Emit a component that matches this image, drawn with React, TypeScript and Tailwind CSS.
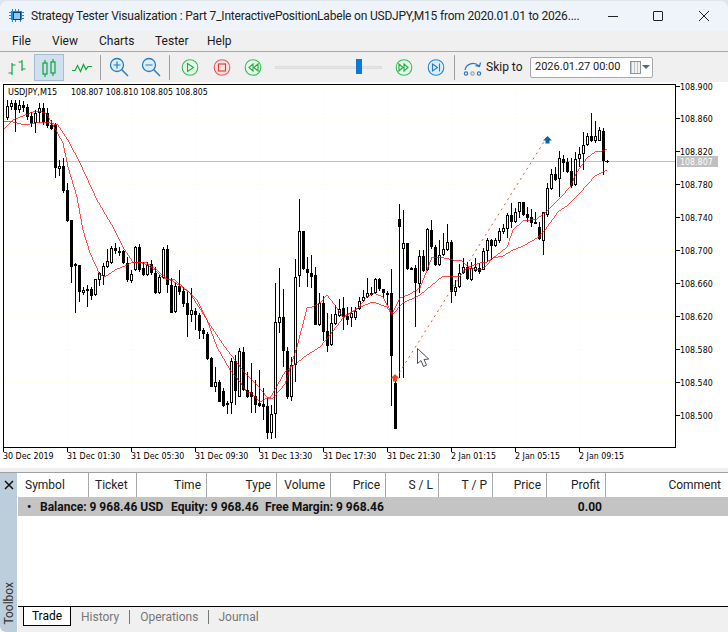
import * as React from "react";

// [x, high, low, bodyTop, bodyBottom, hollow]
const CANDLES: number[][] = [
  [7,100,120,106,118,1],[11,100,110,103,107,1],[15,100,132,103,110,0],[19,100,113,105,110,1],[23,101,112,105,108,0],
  [27,104,120,107,117,0],[31,112,127,116,123,0],[35,110,133,113,123,1],[39,103,123,108,113,1],[43,103,125,108,122,0],
  [47,108,128,113,126,0],[51,120,130,125,129,0],[55,123,178,125,168,0],[59,160,176,166,169,1],[63,158,193,166,191,0],
  [67,183,222,190,221,0],[71,220,283,220,267,0],[75,263,313,264,266,1],[79,265,302,265,292,0],[83,287,295,290,293,1],
  [87,285,307,289,291,0],[91,287,300,289,296,0],[95,279,296,279,295,1],[99,272,286,273,280,1],[103,263,285,266,276,1],
  [107,249,268,261,267,1],[111,246,264,248,263,1],[115,243,254,248,251,0],[119,247,256,251,253,0],[123,250,264,251,263,0],
  [127,257,282,263,280,0],[131,270,283,274,281,1],[135,246,271,247,270,1],[139,244,272,247,270,0],[143,262,276,268,275,0],
  [147,262,276,265,275,1],[151,260,275,264,273,0],[155,267,294,273,293,0],[159,275,294,277,293,1],[163,247,279,249,278,1],
  [167,245,293,249,285,0],[171,278,313,285,313,0],[175,283,313,286,312,1],[179,270,295,286,292,0],[183,287,307,291,304,0],
  [187,292,337,303,315,0],[191,288,322,310,315,1],[195,308,330,311,315,0],[199,313,339,315,331,0],[203,328,339,330,334,0],
  [207,332,360,334,359,0],[211,357,387,358,387,0],[215,367,392,382,387,1],[219,380,402,382,402,0],[223,388,407,391,406,0],
  [227,401,414,403,405,1],[231,358,414,361,403,1],[235,355,405,361,391,0],[239,348,397,351,397,1],[243,347,391,352,390,0],
  [247,372,398,390,397,0],[251,363,413,392,397,0],[255,380,413,396,405,0],[259,370,407,403,406,0],[263,388,420,404,407,0],
  [267,398,439,406,433,0],[271,405,439,414,433,1],[275,283,438,322,414,1],[279,268,333,317,323,1],[283,289,367,317,351,0],
  [287,347,399,351,397,0],[291,357,401,365,397,1],[295,259,382,277,365,1],[299,199,287,231,276,1],[303,231,270,231,269,0],
  [307,257,287,269,273,0],[311,255,288,273,277,0],[315,267,325,275,325,0],[319,293,326,303,325,1],[323,296,341,303,332,0],
  [327,313,352,331,346,0],[331,314,346,323,345,1],[335,305,325,314,324,1],[339,299,317,309,316,1],[343,297,330,308,317,0],
  [347,307,325,316,320,0],[351,307,327,313,318,1],[355,307,320,311,318,1],[359,297,310,301,309,1],[363,290,302,297,301,1],
  [367,278,298,293,297,1],[371,287,296,293,295,0],[375,278,294,279,293,1],[379,278,291,279,289,0],[383,289,298,289,293,0],
  [387,291,305,293,294,0],[391,269,406,293,356,0],[395,378,429,383,429,0],[399,204,378,219,227,0],[403,210,378,243,249,1],
  [407,243,270,243,269,0],[411,267,270,268,269,0],[415,265,327,268,283,0],[419,250,293,256,284,1],[423,250,272,256,271,0],
  [427,228,271,229,270,1],[431,220,249,230,247,0],[435,245,266,247,265,0],[439,240,266,255,265,1],[443,233,256,249,255,1],
  [447,224,251,242,250,1],[451,240,303,242,292,0],[455,280,296,287,292,1],[459,264,288,273,287,1],[463,258,274,267,273,1],
  [467,262,280,267,279,0],[471,262,281,268,280,1],[475,258,272,267,271,1],[479,263,274,268,272,0],[483,248,270,251,270,1],
  [487,238,262,240,251,1],[491,239,260,240,246,0],[495,238,247,240,246,1],[499,228,243,231,241,1],[503,224,234,228,232,1],
  [507,213,238,215,229,1],[511,203,228,215,222,0],[515,208,223,212,222,1],[519,202,218,202,212,1],[523,202,216,202,215,0],
  [527,207,222,214,218,0],[531,209,227,217,223,0],[535,212,224,222,223,0],[539,222,240,227,239,0],[543,212,255,212,241,1],
  [547,183,217,188,215,1],[551,169,190,174,189,1],[555,167,181,174,180,0],[559,151,197,158,179,1],[563,155,172,159,163,0],
  [567,158,173,162,172,0],[571,158,188,171,186,0],[575,152,186,159,185,1],[579,147,167,154,159,1],[583,132,170,145,154,1],
  [587,133,146,136,145,1],[591,113,142,136,141,0],[595,121,143,136,141,1],[599,127,141,130,141,1],[603,128,175,131,161,0],
];

const FAST =
  "3,130 13,120 20,117 33,112 40,111 47,114 53,125 63,143 68,167 77,197 83,230 90,253 100,275 105,277 115,270 127,265 133,262 147,263 157,270 167,279 175,280 190,293 197,300 207,320 217,347 230,370 240,382 247,392 250,392 260,402 267,398 273,398 285,384 297,347 307,308 312,307 320,303 327,295 335,305 343,317 353,311 358,308 367,297 373,293 383,297 392,314 400,298 410,294 420,288 427,270 432,257 440,257 453,260 462,261 468,267 480,263 487,262 497,255 507,247 513,230 523,221 537,219 548,210 560,198 570,187 577,172 587,158 595,152 602,151 607,149";
const SLOW =
  "3,121 13,122 25,125 40,122 50,123 58,125 68,140 80,163 97,200 113,227 123,247 133,262 140,262 147,265 155,270 163,278 173,281 190,293 207,320 225,347 245,373 257,385 267,397 270,398 285,372 307,355 320,347 330,335 343,318 360,307 373,302 387,307 392,315 403,303 420,295 443,276 460,276 467,268 480,270 485,267 493,258 503,256 513,250 523,246 537,238 545,230 558,212 568,205 580,193 595,176 607,170";

const PRICES = [
  ["108.900", 86], ["108.860", 118], ["108.820", 151], ["108.780", 184], ["108.740", 217], ["108.700", 250],
  ["108.660", 283], ["108.620", 316], ["108.580", 349], ["108.540", 382], ["108.500", 415],
] as const;

const TIMES = [
  "30 Dec 2019", "31 Dec 01:30", "31 Dec 05:30", "31 Dec 09:30", "31 Dec 13:30", "31 Dec 17:30", "31 Dec 21:30",
  "2 Jan 01:15", "2 Jan 05:15", "2 Jan 09:15",
];

function Chart() {
  const tickX = TIMES.map((_, i) => 3 + 64 * i);
  return (
    <svg width={728} height={386} viewBox="0 82 728 386" className="block bg-white" style={{ fontFamily: '"DejaVu Sans Condensed", "Liberation Sans", sans-serif' }}>
      {/* faint grid */}
      {PRICES.map(([, y]) => (
        <line key={y} x1={4} x2={675} y1={y + 0.5} y2={y + 0.5} stroke="#fcfbdc" strokeDasharray="1 3" />
      ))}
      {tickX.slice(1).map((x) => (
        <line key={x} x1={x + 0.5} x2={x + 0.5} y1={85} y2={447} stroke="#fcfbdc" strokeDasharray="1 3" />
      ))}
      <rect x={4} y={161} width={671} height={1} fill="#c0c0c0" />

      {/* candles */}
      <g shapeRendering="crispEdges">
        {CANDLES.map(([x, hi, lo, top, bot, hollow]) => (
          <g key={x}>
            <rect x={x} y={hi} width={1} height={Math.max(lo - hi, 1)} fill="#000" />
            <rect x={x - 1} y={top} width={3} height={Math.max(bot - top, 2)} fill="#000" />
            {hollow === 1 && bot - top > 2 && <rect x={x} y={top + 1} width={1} height={bot - top - 2} fill="#fff" />}
          </g>
        ))}
        <rect x={605} y={161} width={4} height={1} fill="#000" />
        <rect x={607} y={160} width={1} height={3} fill="#000" />
        <polyline points={SLOW} fill="none" stroke="#ff0000" strokeWidth={0.7} />
        <polyline points={FAST} fill="none" stroke="#ff0000" strokeWidth={0.7} />
      </g>

      {/* trend between the two markers */}
      <line x1={396} y1={378} x2={547} y2={137} stroke="#e0532a" strokeDasharray="2 4" />
      <path d="M395 374l4.500 4.500-2.500 0 0 3-4 0 0-3-2.500 0z" fill="#e8491f" />
      <path d="M547.500 136l4.500 4.500-2.500 0 0 3-4 0 0-3-2.500 0z" fill="#0b62a8" />
      <path d="M417.500 348.500v15l3.500-3 2.500 6 3-1.300-2.500-5.700 4.700-.5z" fill="#fff" stroke="#4a5058" />

      {/* frame and axes */}
      <g shapeRendering="crispEdges" fill="#000">
        <rect x={3} y={84} width={673} height={1} />
        <rect x={3} y={84} width={1} height={364} />
        <rect x={675} y={84} width={1} height={364} />
        <rect x={3} y={447} width={673} height={1} />
        {PRICES.map(([, y]) => <rect key={y} x={675} y={y} width={5} height={1} />)}
        {tickX.map((x) => <rect key={x} x={x} y={447} width={1} height={5} />)}
      </g>
      <text x={8} y={95} fontSize={9} fill="#000">USDJPY,M15</text>
      <text x={71} y={95} fontSize={8.7} fill="#000">108.807 108.810 108.805 108.805</text>
      {PRICES.map(([label, y]) => (
        <text key={label} x={680} y={y + 3.500} fontSize={8.8} fill="#000">{label}</text>
      ))}
      {TIMES.map((label, i) => (
        <text key={label} x={tickX[i]} y={459} fontSize={8.8} fill="#000">{label}</text>
      ))}
      <rect x={677} y={156} width={41} height={11} fill="#c0c0c0" />
      <text x={680} y={164.500} fontSize={8.8} fill="#fff">108.807</text>
    </svg>
  );
}

function Ring({ stroke, fill, children }: { stroke: string; fill: string; children: React.ReactNode }) {
  return (
    <svg width={24} height={24} viewBox="0 0 24 24" className="shrink-0">
      <circle cx={12} cy={12.500} r={7.800} fill={fill} stroke={stroke} strokeWidth={1.100} />
      {children}
    </svg>
  );
}

function Loupe({ minus }: { minus?: boolean }) {
  return (
    <svg width={24} height={24} viewBox="0 0 24 24" className="shrink-0">
      <circle cx={10} cy={10} r={6.500} fill="#dbeefb" stroke="#2a7cc0" strokeWidth={1.300} />
      <path d="M14.800 14.800L21 21" stroke="#2a7cc0" strokeWidth={1.500} />
      <path d={minus ? "M6.500 10h7" : "M6.500 10h7M10 6.500v7"} stroke="#2a7cc0" strokeWidth={1.200} />
    </svg>
  );
}

function Toolbar() {
  const sep = "w-px h-[25px] bg-[#a0a0a0] shrink-0";
  return (
    <div className="flex h-[30px] items-center bg-[#f0f0f0] text-[12px] text-[#1a1a1a]">
      <svg width={24} height={24} viewBox="0 0 24 24" className="ml-[6px] shrink-0" fill="none" stroke="#10a53a" strokeWidth={1.200}>
        <path d="M6 8v12M2.500 18H6M6 10h3.500M16 5v11M12.500 7H16M16 14h3.500" />
      </svg>
      <div className="ml-[4px] flex h-[27px] w-[30px] shrink-0 items-center justify-center border border-[#a9bccd] bg-[#cfe0ef]">
        <svg width={24} height={24} viewBox="0 0 24 24" fill="none" stroke="#10a53a" strokeWidth={1.200}>
          <path d="M8 5v3M8 19v3M16 4v3M16 18v3" />
          <rect x={6} y={8} width={4} height={11} />
          <rect x={14} y={7} width={4} height={11} />
        </svg>
      </div>
      <svg width={24} height={24} viewBox="0 0 24 24" className="ml-[6px] shrink-0" fill="none" stroke="#10a53a" strokeWidth={1.200}>
        <path d="M2 15.500h3l2.500-5 3 6 3-7 2.500 5 2-3h4" />
      </svg>
      <div className={`${sep} ml-[6px]`} />
      <div className="ml-[6px]"><Loupe /></div>
      <div className="ml-[8px]"><Loupe minus /></div>
      <div className={`${sep} ml-[6px]`} />
      <div className="ml-[8px]">
        <Ring stroke="#35bf52" fill="#e6f9e8"><path d="M9.500 8.500l6 4-6 4z" fill="none" stroke="#27a844" strokeWidth={1.100} /></Ring>
      </div>
      <div className="ml-[8px]">
        <Ring stroke="#e95a5a" fill="#fde0e0"><rect x={8.500} y={9} width={7} height={7} fill="none" stroke="#d83a3a" strokeWidth={1.100} /></Ring>
      </div>
      <div className="ml-[7px]">
        <Ring stroke="#35bf52" fill="#e6f9e8"><path d="M12 9l-4 3.500 4 3.500zM17 9l-4 3.500 4 3.500z" fill="none" stroke="#27a844" strokeWidth={1.100} /></Ring>
      </div>
      <div className="relative ml-[10px] h-[3px] w-[107px] shrink-0 border border-[#dcdcdc] bg-[#e6e6e6]">
        <div className="absolute left-[80px] top-[-8px] h-[15px] w-[6px] bg-[#0a78d7]" />
      </div>
      <div className="ml-[10px]">
        <Ring stroke="#35bf52" fill="#e6f9e8"><path d="M7 9l4 3.500-4 3.500zM12 9l4 3.500-4 3.500z" fill="none" stroke="#27a844" strokeWidth={1.100} /></Ring>
      </div>
      <div className="ml-[8px]">
        <Ring stroke="#2a85cf" fill="#d9edfb"><path d="M8.500 9l5 3.500-5 3.500zM15.500 8.500v8" fill="none" stroke="#2a7cc0" strokeWidth={1.100} /></Ring>
      </div>
      <div className={`${sep} ml-[6px]`} />
      <svg width={24} height={24} viewBox="0 0 24 24" className="ml-[7px] shrink-0" fill="none" stroke="#2a7cc0" strokeWidth={1.200}>
        <path d="M3 15c1-6 9-9 14-4M18.500 7.500l-1 4-4-.800" />
        <circle cx={4} cy={18.500} r={1.700} stroke="#2a7cc0" />
        <circle cx={10.500} cy={18.500} r={1.700} stroke="#9aa5ad" />
        <circle cx={17} cy={18.500} r={1.700} stroke="#2a7cc0" />
      </svg>
      <span className="w-[44px] shrink-0 whitespace-nowrap">Skip to</span>
      <div className="flex h-[21px] w-[123px] shrink-0 items-center justify-between rounded-[2px] border border-[#a8a8a8] bg-white pl-[4px] pr-[2px]">
        <span className="whitespace-nowrap text-[11px]">2026.01.27 00:00</span>
        <span className="flex items-center gap-px">
          <span className="block h-[13px] w-[11px] border border-[#8c959c] bg-[repeating-linear-gradient(90deg,#c2c8cc_0,#c2c8cc_1px,#f2f2f2_1px,#f2f2f2_3px)]" />
          <span className="block h-0 w-0 border-x-[4px] border-t-[4px] border-x-transparent border-t-[#4a6d8c]" />
        </span>
      </div>
    </div>
  );
}

const COLUMNS = [
  { label: "Symbol", w: "w-[71px]", cls: "pl-[7px] text-left" },
  { label: "Ticket", w: "w-[48px]", cls: "pl-[6px] text-left" },
  { label: "Time", w: "w-[70px]", cls: "pr-[5px] text-right" },
  { label: "Type", w: "w-[70px]", cls: "pr-[5px] text-right" },
  { label: "Volume", w: "w-[54px]", cls: "pr-[5px] text-right" },
  { label: "Price", w: "w-[55px]", cls: "pr-[5px] text-right" },
  { label: "S / L", w: "w-[53px]", cls: "pr-[5px] text-right" },
  { label: "T / P", w: "w-[54px]", cls: "pr-[5px] text-right" },
  { label: "Price", w: "w-[54px]", cls: "pr-[5px] text-right" },
  { label: "Profit", w: "w-[59px]", cls: "pr-[5px] text-right" },
];

function Toolbox() {
  return (
    <div className="flex h-[160px] border-t border-[#a0a0a0] bg-white text-[12px] text-[#222]">
      <div className="flex w-[17px] shrink-0 flex-col items-center justify-between rounded-bl-[6px] bg-[#bccddc]">
        <svg width={10} height={10} viewBox="0 0 10 10" className="mt-[7px]" stroke="#111" strokeWidth={1.500}>
          <path d="M1 1l8 8M9 1l-8 8" />
        </svg>
        <span className="mb-[7px] rotate-180 [writing-mode:vertical-rl] text-[#333]">Toolbox</span>
      </div>
      <div className="flex min-w-0 flex-1 flex-col pl-px">
        <div className="flex h-[24px] shrink-0 items-center">
          {COLUMNS.map((c, i) => (
            <div key={i} className={`${c.w} ${c.cls} h-full shrink-0 border-r border-[#a8a8a8] leading-[24px]`}>{c.label}</div>
          ))}
          <div className="flex-1 pr-[7px] text-right">Comment</div>
        </div>
        <div className="flex h-[19px] shrink-0 items-center whitespace-pre bg-[#c4c4c4] font-bold text-[#111]">
          <span className="w-[22px] pl-[9px]">•</span>
          <span className="w-[131px]">Balance: 9 968.46 USD</span>
          <span className="w-[94px]">Equity: 9 968.46</span>
          <span className="w-[297px]">Free Margin: 9 968.46</span>
          <span className="w-[40px] text-right">0.00</span>
        </div>
        <div className="flex-1" />
        <div className="flex h-[26px] shrink-0 items-start border-t border-black bg-[#f0f0f0] pl-[5px]">
          <div className="flex h-[19px] w-[48px] items-center justify-center border-x border-b border-black bg-white text-black">Trade</div>
          <span className="ml-[10px] mt-[1px] text-[#777]">History</span>
          <span className="ml-[10px] mt-[3px] h-[14px] w-px bg-[#777]" />
          <span className="ml-[10px] mt-[1px] text-[#777]">Operations</span>
          <span className="ml-[10px] mt-[3px] h-[14px] w-px bg-[#777]" />
          <span className="ml-[9px] mt-[1px] text-[#777]">Journal</span>
        </div>
      </div>
    </div>
  );
}

export default function App() {
  return (
    <div className="h-[632px] w-[728px] overflow-hidden bg-[#dfe6ea] pt-[1px]" style={{ fontFamily: "Roboto, sans-serif" }}>
      <div className="h-[631px] w-[728px] overflow-hidden rounded-t-[8px] bg-[#f0f0f0]">
        {/* title bar */}
        <div className="flex h-[30px] items-center bg-[#eef4f9] text-[12px] text-[#222]">
          <svg width={16} height={16} viewBox="0 0 16 16" className="ml-[9px] shrink-0" fill="#1c86e0">
            <path d="M3 1h1v2h2V1h1v2h2V1h1v2h2V1h0v2h1v1h2v1h-2v2h2v1h-2v2h2v1h-2v1h-1v2h-1v-2h-2v2H9v-2H7v2H6v-2H4v2H3v-2H2v-1H0v-1h2V8H0V7h2V5H0V4h2V3h1z" />
            <rect x={4} y={4} width={8} height={8} fill="#0d3f73" />
            <rect x={5} y={5} width={6} height={6} fill="#8fc8f5" />
          </svg>
          <span className="ml-[6px] w-[560px] shrink-0 whitespace-nowrap tracking-[-0.2px]">
            Strategy Tester Visualization : Part 7_InteractivePositionLabele on USDJPY,M15 from 2020.01.01 to 2026....
          </span>
          <span className="ml-[17px] h-px w-[10px] shrink-0 bg-[#222]" />
          <span className="ml-[35px] h-[10px] w-[10px] shrink-0 rounded-[1px] border border-[#222]" />
          <svg width={10} height={10} viewBox="0 0 10 10" className="ml-[36px] shrink-0" stroke="#222">
            <path d="M0 0l10 10M10 0L0 10" />
          </svg>
        </div>
        {/* menu */}
        <div className="flex h-[21px] items-center border-b border-[#a8a8a8] bg-[#f0f0f0] pl-[12px] text-[12px] text-[#1a1a1a]">
          <span className="w-[40px]">File</span>
          <span className="w-[47px]">View</span>
          <span className="w-[56px]">Charts</span>
          <span className="w-[52px]">Tester</span>
          <span>Help</span>
        </div>
        <Toolbar />
        <Chart />
        <div className="h-[4px] bg-[#f0f0f0]" />
        <Toolbox />
      </div>
    </div>
  );
}
